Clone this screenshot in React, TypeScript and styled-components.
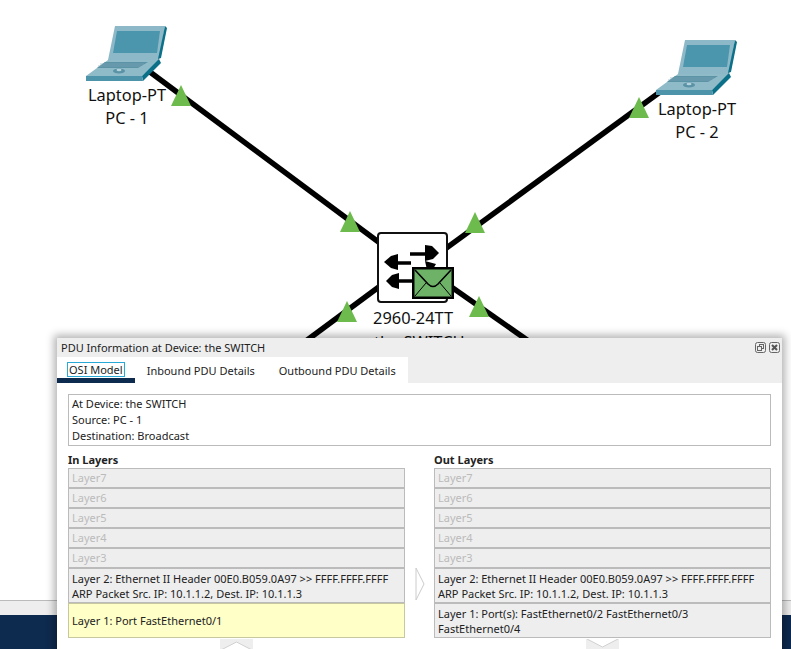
import styled, { createGlobalStyle } from 'styled-components'

const GlobalStyle = createGlobalStyle`
  html, body {
    margin: 0;
    padding: 0;
    background: #fff;
  }
`

const layerNames = ['Layer7', 'Layer6', 'Layer5', 'Layer4', 'Layer3']

const links = [
  { x1: 150, y1: 72, x2: 400, y2: 258 },
  { x1: 660, y1: 92, x2: 430, y2: 260 },
  { x1: 395, y1: 275, x2: 260, y2: 375 },
  { x1: 430, y1: 272, x2: 570, y2: 370 },
]

const triangles = [
  { x: 181, y: 95 },
  { x: 350, y: 221 },
  { x: 639, y: 107 },
  { x: 475, y: 222 },
  { x: 347, y: 311 },
  { x: 479, y: 306 },
]

const LaptopIcon = () => (
  <svg width="82" height="56" viewBox="0 0 82 56">
    <path d="M29 0 H79 L73 34 H22 Z" fill="#8db8c7" />
    <path d="M79 0 L81 2 L75 32 L72 33 Z" fill="#0b7088" />
    <path d="M31 5 H74 L71 27 H27 Z" fill="#4c96ad" />
    <path d="M22 34 H73 L56 50 H0 Z" fill="#8fbbc9" />
    <path d="M19 36 H62 L52 42 H11 Z" fill="#5c93a5" />
    <path d="M14 38 H58 M12 40 H55" stroke="#7fa9b8" strokeWidth="0.6" />
    <path d="M73 33 L75 37 L57 55 L56 50 Z" fill="#0b7088" />
    <path d="M0 50 H56 L57 55 H0 Z" fill="#4d93a9" />
    <ellipse cx="33" cy="45" rx="6" ry="2.4" fill="#5a93a6" />
    <ellipse cx="33" cy="44" rx="2.5" ry="1.2" fill="#b5d3dc" />
  </svg>
)

const SwitchGlyph = () => (
  <svg width="67" height="67" viewBox="0 0 67 67">
    <path d="M31 20 H48" stroke="#000" strokeWidth="3.5" />
    <path d="M46 11 L53 12 L60 19 L54 25 L46 27 Z" fill="#000" />
    <path d="M46 27 L57 30 L54 35 L48 36 Z" fill="#000" />
    <path d="M5 28 L12 22 L19 20 L19 36 L12 34 Z" fill="#000" />
    <path d="M16 29 H32" stroke="#000" strokeWidth="3.5" />
    <path d="M7 47 L13 41 L20 39 L20 55 L13 53 Z" fill="#000" />
    <path d="M17 47 H36" stroke="#000" strokeWidth="3.5" />
  </svg>
)

const EnvelopeIcon = () => (
  <svg width="42" height="32" viewBox="0 0 42 32">
    <rect x="1.25" y="1.25" width="39.5" height="29.5" fill="#6eb268" stroke="#000" strokeWidth="2.5" />
    <path d="M3 3 L16 17 Q21 22 26 17 L39 3" fill="none" stroke="#000" strokeWidth="1.6" />
    <path d="M3 29 L14 16 M39 29 L28 16" stroke="#000" strokeWidth="1" />
  </svg>
)

const RestoreIcon = () => (
  <svg width="11" height="11" viewBox="0 0 11 11">
    <rect x="0.5" y="0.5" width="10" height="10" rx="2" fill="#eee" stroke="#666" />
    <rect x="4.5" y="2.5" width="4" height="4" fill="none" stroke="#666" />
    <rect x="2.5" y="4.5" width="4" height="4" fill="#eee" stroke="#666" />
  </svg>
)

const CloseIcon = () => (
  <svg width="11" height="11" viewBox="0 0 11 11">
    <rect x="0.5" y="0.5" width="10" height="10" rx="2" fill="#eee" stroke="#666" />
    <path d="M3 3 L8 8 M8 3 L3 8" stroke="#555" strokeWidth="2" />
  </svg>
)

export default function App() {
  return (
    <Page>
      <GlobalStyle />
      <Canvas>
        <LinkLayer width="791" height="649" viewBox="0 0 791 649">
          {links.map((l) => (
            <line key={l.x1} {...l} stroke="#000" strokeWidth="5.5" />
          ))}
        </LinkLayer>
        <Node $left={81} $top={26}>
          <LaptopIcon />
          <NodeLabel>Laptop-PT</NodeLabel>
          <NodeLabel>PC - 1</NodeLabel>
        </Node>
        <Node $left={651} $top={40}>
          <LaptopIcon />
          <NodeLabel>Laptop-PT</NodeLabel>
          <NodeLabel>PC - 2</NodeLabel>
        </Node>
        <SwitchBox>
          <SwitchGlyph />
        </SwitchBox>
        <EnvelopeSlot>
          <EnvelopeIcon />
        </EnvelopeSlot>
        <SwitchLabel>2960-24TT</SwitchLabel>
        <SwitchName>the SWITCH</SwitchName>
        {triangles.map((t) => (
          <Triangle key={t.x} $x={t.x} $y={t.y} />
        ))}
      </Canvas>

      <BottomBar />

      <Dialog>
        <TitleBar>
          <TitleText>PDU Information at Device: the SWITCH</TitleText>
          <WindowButtons>
            <RestoreIcon />
            <CloseIcon />
          </WindowButtons>
        </TitleBar>
        <TabRow>
          <Tab $active>
            <FocusLabel>OSI Model</FocusLabel>
          </Tab>
          <Tab>Inbound PDU Details</Tab>
          <Tab>Outbound PDU Details</Tab>
        </TabRow>
        <DialogBody>
          <InfoBox>
            <div>At Device: the SWITCH</div>
            <div>Source: PC - 1</div>
            <div>Destination: Broadcast</div>
          </InfoBox>
          <Columns>
            <Column>
              <ColumnTitle>In Layers</ColumnTitle>
              <LayerList>
                {layerNames.map((name) => (
                  <EmptyLayer key={name}>{name}</EmptyLayer>
                ))}
                <TallLayer>
                  <div>Layer 2: Ethernet II Header 00E0.B059.0A97 &gt;&gt; FFFF.FFFF.FFFF</div>
                  <div>ARP Packet Src. IP: 10.1.1.2, Dest. IP: 10.1.1.3</div>
                </TallLayer>
                <TallLayer $selected>Layer 1: Port FastEthernet0/1</TallLayer>
              </LayerList>
              <StepButton>
                <svg width="33" height="11" viewBox="0 0 33 11">
                  <path d="M1 11 L16.5 3 L32 11" fill="#fff" stroke="#d0d0d0" />
                </svg>
              </StepButton>
            </Column>
            <ArrowSlot>
              <svg width="10" height="34" viewBox="0 0 10 34">
                <path d="M1 1 L9 17 L1 33 Z" fill="#fff" stroke="#ccc" />
              </svg>
            </ArrowSlot>
            <Column>
              <ColumnTitle>Out Layers</ColumnTitle>
              <LayerList>
                {layerNames.map((name) => (
                  <EmptyLayer key={name}>{name}</EmptyLayer>
                ))}
                <TallLayer>
                  <div>Layer 2: Ethernet II Header 00E0.B059.0A97 &gt;&gt; FFFF.FFFF.FFFF</div>
                  <div>ARP Packet Src. IP: 10.1.1.2, Dest. IP: 10.1.1.3</div>
                </TallLayer>
                <TallLayer>
                  <div>Layer 1: Port(s): FastEthernet0/2 FastEthernet0/3</div>
                  <div>FastEthernet0/4</div>
                </TallLayer>
              </LayerList>
              <StepButton>
                <svg width="33" height="11" viewBox="0 0 33 11">
                  <path d="M1 0 L16.5 8 L32 0" fill="#fff" stroke="#d0d0d0" />
                </svg>
              </StepButton>
            </Column>
          </Columns>
        </DialogBody>
      </Dialog>
    </Page>
  )
}

const Page = styled.div`
  position: relative;
  width: 791px;
  height: 649px;
  overflow: hidden;
  background: #fff;
  font-family: 'Noto Sans', sans-serif;
`

const Canvas = styled.div`
  position: absolute;
  inset: 0;
`

const LinkLayer = styled.svg`
  position: absolute;
  left: 0;
  top: 0;
`

const Node = styled.div<{ $left: number; $top: number }>`
  position: absolute;
  left: ${(p) => p.$left}px;
  top: ${(p) => p.$top}px;
  width: 92px;
  display: flex;
  flex-direction: column;
  align-items: center;

  svg {
    margin-bottom: 1px;
  }
`

const NodeLabel = styled.div`
  font-size: 16.4px;
  line-height: 23px;
  color: #111;
  white-space: nowrap;
`

const SwitchBox = styled.div`
  position: absolute;
  left: 377px;
  top: 232px;
  width: 67px;
  height: 67px;
  border: 2px solid #111;
  border-radius: 4px;
  background: #fff;
  line-height: 0;
`

const EnvelopeSlot = styled.div`
  position: absolute;
  left: 412px;
  top: 267px;
  line-height: 0;
`

const SwitchLabel = styled.div`
  position: absolute;
  left: 373px;
  top: 306px;
  font-size: 16.4px;
  line-height: 24px;
  color: #111;
`

const SwitchName = styled(SwitchLabel)`
  left: 374px;
  top: 330px;
`

const Triangle = styled.div<{ $x: number; $y: number }>`
  position: absolute;
  left: ${(p) => p.$x - 10.5}px;
  top: ${(p) => p.$y - 10}px;
  width: 0;
  height: 0;
  border-left: 10.5px solid transparent;
  border-right: 10.5px solid transparent;
  border-bottom: 21px solid #6cbb4c;
`

const BottomBar = styled.div`
  position: absolute;
  left: 0;
  right: 0;
  bottom: 0;
  height: 49px;
  background: #0d2a4f;
  border-top: 1px solid #bbb;
  box-sizing: border-box;

  &::before {
    content: '';
    display: block;
    height: 14px;
    background: #eee;
  }
`

const Dialog = styled.div`
  position: absolute;
  left: 57px;
  top: 338px;
  width: 725px;
  height: 320px;
  background: #fff;
  box-shadow: 0 0 8px 3px rgba(0, 0, 0, 0.3);
  font-size: 11px;
  color: #222;
`

const TitleBar = styled.div`
  height: 19px;
  padding: 0 2px 0 4px;
  background: #eee;
  display: flex;
  align-items: center;
  justify-content: space-between;
`

const TitleText = styled.div`
  white-space: nowrap;
`

const WindowButtons = styled.div`
  display: flex;
  gap: 3px;
  line-height: 0;
`

const TabRow = styled.div`
  height: 26px;
  background: linear-gradient(to right, #fff 351px, #eee 351px);
  display: flex;
`

const Tab = styled.div<{ $active?: boolean }>`
  box-sizing: border-box;
  height: 26px;
  padding: 6px 12px 0;
  white-space: nowrap;
  border-bottom: 5px solid ${(p) => (p.$active ? '#0d2a4f' : 'transparent')};
`

const FocusLabel = styled.span`
  display: block;
  margin: -1px -2px 0 -2px;
  padding: 0 1px;
  border: 1px solid #29a9d6;
  line-height: 13px;
`

const DialogBody = styled.div`
  padding: 11px 11px 0;
`

const InfoBox = styled.div`
  box-sizing: border-box;
  height: 52px;
  padding: 1px 3px;
  border: 1px solid #bbb;
  line-height: 16px;
`

const Columns = styled.div`
  margin-top: 6px;
  display: grid;
  grid-template-columns: 337px 29px 337px;
`

const Column = styled.div`
  display: flex;
  flex-direction: column;
`

const ColumnTitle = styled.div`
  height: 16px;
  line-height: 15px;
  font-weight: 700;
`

const LayerList = styled.div`
  display: flex;
  flex-direction: column;
`

const EmptyLayer = styled.div`
  box-sizing: border-box;
  height: 20px;
  padding: 0 3px;
  border: 1px solid #bbb;
  background: #eee;
  color: #bbb;
  line-height: 18px;
`

const TallLayer = styled.div<{ $selected?: boolean }>`
  box-sizing: border-box;
  height: 35px;
  padding: 0 3px;
  border: 1px solid ${(p) => (p.$selected ? '#c8c8a0' : '#bbb')};
  background: ${(p) => (p.$selected ? '#ffffc8' : '#eee')};
  line-height: 15px;
  display: flex;
  flex-direction: column;
  justify-content: center;
`

const ArrowSlot = styled.div`
  display: flex;
  justify-content: center;
  padding-top: 115px;
  line-height: 0;
`

const StepButton = styled.div`
  align-self: center;
  margin-top: 1px;
  line-height: 0;
  background: #eee;
`
